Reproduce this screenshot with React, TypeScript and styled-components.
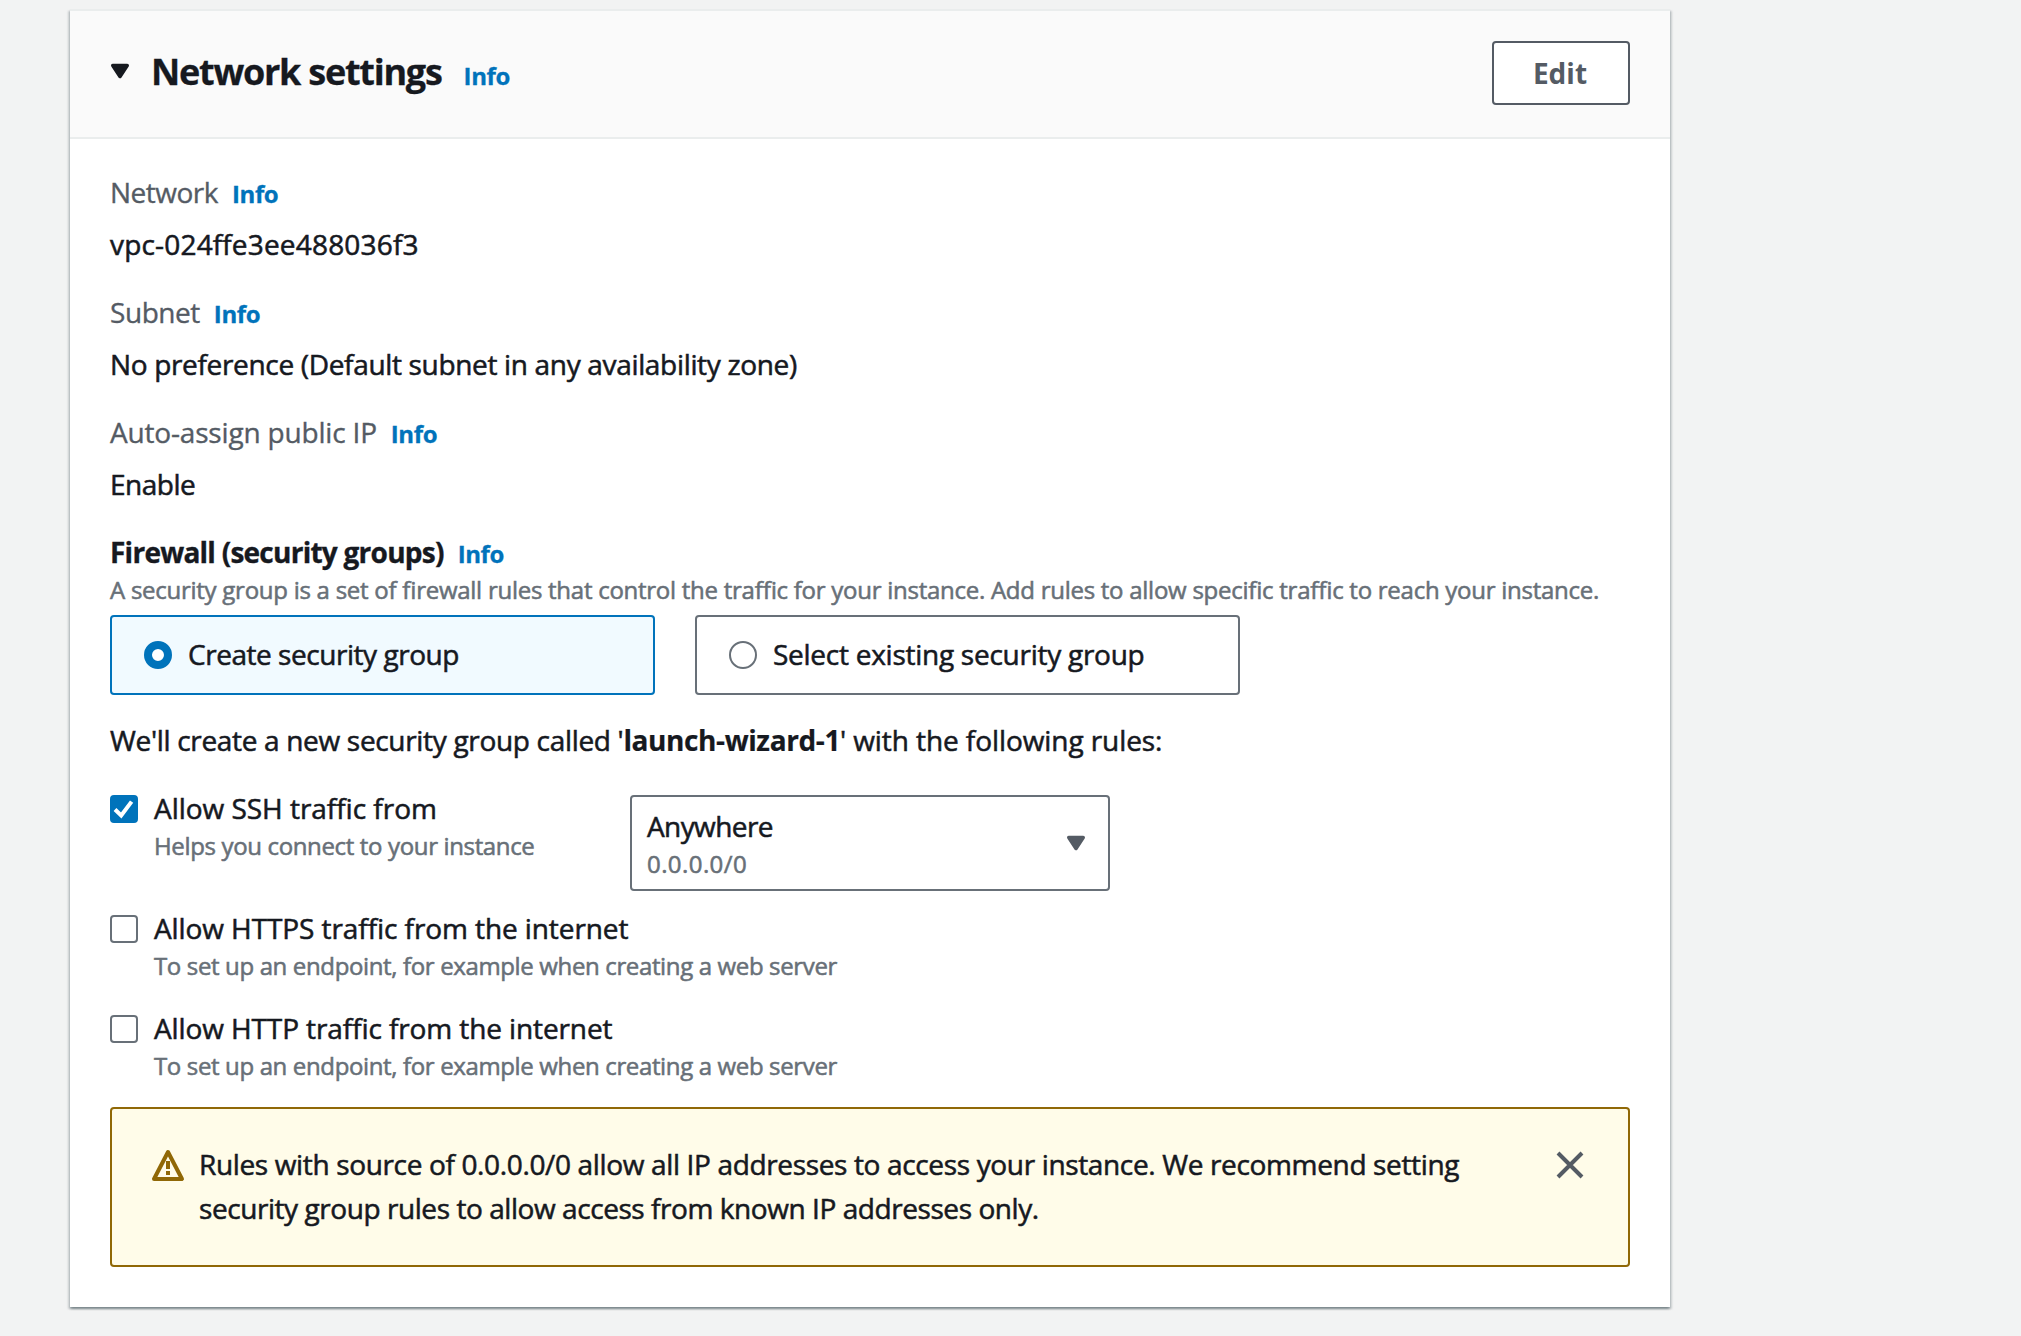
import React from 'react';
import styled, { createGlobalStyle } from 'styled-components';

const color = {
  page: '#f2f3f3',
  text: '#16191f',
  label: '#545b64',
  hint: '#687078',
  link: '#0073bb',
  selected: '#f1faff',
  divider: '#eaeded',
  warning: '#906806',
  warningBg: '#fffce9',
};

const GlobalStyle = createGlobalStyle`
  *, *::before, *::after { box-sizing: border-box; }
  html, body { margin: 0; background: ${color.page}; }
  body {
    min-height: 1336px;
    overflow: hidden;
    color: ${color.text};
    font-family: 'Open Sans', 'Noto Sans', sans-serif;
    font-size: 28px;
    line-height: 44px;
    font-feature-settings: 'liga' 1, 'kern' 1;
  }
  button { font: inherit; cursor: pointer; }
`;

const Page = styled.main`
  min-height: 1336px;
  padding: 9px 0 29px 70px;
`;

const Panel = styled.section`
  width: 1600px;
  background: #fff;
  border-top: 2px solid ${color.divider};
  box-shadow:
    0 2px 2px 0 rgba(0, 28, 36, 0.3),
    2px 2px 2px 0 rgba(0, 28, 36, 0.15),
    -2px 2px 2px 0 rgba(0, 28, 36, 0.15);
`;

const PanelHeader = styled.header`
  display: flex;
  align-items: flex-start;
  height: 128px;
  padding: 30px 40px 0;
  background: #fafafa;
  border-bottom: 2px solid ${color.divider};
`;

const HeaderCaret = styled.svg`
  flex: none;
  margin: 22px 21px 0 0;
`;

const TitleRow = styled.div`
  display: flex;
  flex: 1;
  align-items: baseline;
  gap: 22px;
  margin-top: 9px;
`;

const Title = styled.h2`
  margin: 0;
  font-size: 36px;
  font-weight: 700;
  line-height: 44px;
  letter-spacing: -1.25px;
  -webkit-text-stroke: 0.3px currentColor;
`;

const InfoLink = styled.a`
  color: ${color.link};
  font-size: 24px;
  font-weight: 700;
  letter-spacing: -0.4px;
  text-decoration: none;
  -webkit-text-stroke: 0.3px currentColor;
`;

const EditButton = styled.button`
  width: 138px;
  height: 64px;
  padding: 0 2px 0 0;
  background: #fff;
  border: 2px solid ${color.label};
  border-radius: 4px;
  color: ${color.label};
  font-weight: 700;
`;

const Body = styled.div`
  display: flex;
  flex-direction: column;
  padding: 31px 40px 40px;
`;

const Field = styled.div`
  display: flex;
  flex-direction: column;
  gap: 8px;
  margin-bottom: 24px;
`;

const LabelRow = styled.div<{ $strong?: boolean }>`
  display: flex;
  align-items: baseline;
  gap: 14px;
  height: 44px;
  color: ${(p) => (p.$strong ? color.text : color.label)};
  font-weight: ${(p) => (p.$strong ? 700 : 400)};
`;

const Text = styled.span<{ $track?: number }>`
  white-space: nowrap;
  letter-spacing: ${(p) => p.$track ?? 0}px;
  -webkit-text-stroke: 0.55px currentColor;
`;

const LabelText = styled.span<{ $track?: number }>`
  white-space: nowrap;
  letter-spacing: ${(p) => p.$track ?? 0}px;
  -webkit-text-stroke: 0.35px currentColor;
`;

const Strong = styled.strong`
  font-weight: 700;
  letter-spacing: -0.4px;
  -webkit-text-stroke: 0.2px currentColor;
`;

const Value = styled(Text)`
  height: 44px;
`;

const Hint = styled.div<{ $track?: number }>`
  margin-top: -2px;
  color: ${color.hint};
  font-size: 24px;
  line-height: 36px;
  white-space: nowrap;
  letter-spacing: ${(p) => p.$track ?? 0}px;
  -webkit-text-stroke: 0.55px currentColor;
`;

const Cards = styled.div`
  display: flex;
  gap: 40px;
  margin-top: 7px;
`;

const Card = styled.label<{ $on?: boolean }>`
  display: flex;
  align-items: flex-start;
  gap: 16px;
  width: 545px;
  height: 80px;
  padding: 15px 32px 0;
  background: ${(p) => (p.$on ? color.selected : '#fff')};
  border: 2px solid ${(p) => (p.$on ? color.link : color.hint)};
  border-radius: 4px;
`;

const Radio = styled.span<{ $on?: boolean }>`
  flex: none;
  width: 28px;
  height: 28px;
  margin-top: 9px;
  background: #fff;
  border: ${(p) => (p.$on ? `8px solid ${color.link}` : `2px solid ${color.hint}`)};
  border-radius: 50%;
`;

const Summary = styled.p`
  margin: 23px 0 24px;
`;

const Rule = styled.div<{ $after: number }>`
  display: flex;
  align-items: flex-start;
  margin-bottom: ${(p) => p.$after}px;
`;

const Check = styled.span<{ $on?: boolean }>`
  display: flex;
  flex: none;
  width: 28px;
  height: 28px;
  margin: 9px 16px 0 0;
  background: ${(p) => (p.$on ? color.link : '#fff')};
  border: 2px solid ${(p) => (p.$on ? color.link : color.hint)};
  border-radius: 4px;
`;

const RuleText = styled.div<{ $width?: number }>`
  width: ${(p) => (p.$width ? `${p.$width}px` : 'auto')};
`;

const Select = styled.button`
  display: flex;
  align-items: center;
  justify-content: space-between;
  width: 480px;
  height: 96px;
  margin-top: 9px;
  padding: 0 22px 0 15px;
  background: #fff;
  border: 2px solid ${color.hint};
  border-radius: 4px;
  color: inherit;
  text-align: left;
`;

const SelectText = styled.span`
  display: flex;
  flex-direction: column;
`;

const Alert = styled.div`
  display: flex;
  align-items: flex-start;
  height: 160px;
  margin-top: 23px;
  padding: 33px 43px 0 39px;
  background: ${color.warningBg};
  border: 2px solid ${color.warning};
  border-radius: 4px;
`;

const AlertIcon = styled.svg`
  flex: none;
  margin: 7px 14px 0 0;
`;

const AlertText = styled.div`
  display: flex;
  flex: 1;
  flex-direction: column;
`;

const CloseButton = styled.button`
  display: flex;
  margin-top: 8px;
  padding: 0;
  background: none;
  border: 0;
`;

const caretPath = 'M2 2h16l-8 12z';

const fields = [
  { label: 'Network', lt: -0.5, value: 'vpc-024ffe3ee488036f3', vt: 0.18 },
  {
    label: 'Subnet',
    lt: -0.45,
    value: 'No preference (Default subnet in any availability zone)',
    vt: -0.33,
  },
  { label: 'Auto-assign public IP', lt: -0.18, value: 'Enable', vt: -0.5 },
];

const webServerHint = 'To set up an endpoint, for example when creating a web server';

export default function App() {
  return (
    <>
      <GlobalStyle />
      <Page>
        <Panel>
          <PanelHeader>
            <HeaderCaret width="20" height="16" viewBox="0 0 20 16">
              <path d={caretPath} fill={color.text} stroke={color.text} strokeWidth="4" strokeLinejoin="round" transform="translate(1 .8) scale(.9)" />
            </HeaderCaret>
            <TitleRow>
              <Title>Network settings</Title>
              <InfoLink>Info</InfoLink>
            </TitleRow>
            <EditButton>Edit</EditButton>
          </PanelHeader>
          <Body>
            {fields.map((f) => (
              <Field key={f.label}>
                <LabelRow>
                  <LabelText $track={f.lt}>{f.label}</LabelText>
                  <InfoLink>Info</InfoLink>
                </LabelRow>
                <Value $track={f.vt}>{f.value}</Value>
              </Field>
            ))}

            <LabelRow $strong>
              <LabelText $track={-0.75}>Firewall (security groups)</LabelText>
              <InfoLink>Info</InfoLink>
            </LabelRow>
            <Hint $track={-0.262}>
              A security group is a set of firewall rules that control the traffic for your instance. Add rules to allow
              specific traffic to reach your instance.
            </Hint>
            <Cards>
              <Card $on>
                <Radio $on />
                <Text $track={-0.46}>Create security group</Text>
              </Card>
              <Card>
                <Radio />
                <Text $track={-0.26}>Select existing security group</Text>
              </Card>
            </Cards>

            <Summary>
              <Text $track={-0.32}>We'll create a new security group called '</Text>
              <Strong>launch-wizard-1</Strong>
              <Text $track={-0.08}>' with the following rules:</Text>
            </Summary>

            <Rule $after={15}>
              <Check $on>
                <svg width="24" height="24" viewBox="0 0 24 24">
                  <path d="M3 12.5l6.2 6L19.6 4.6" fill="none" stroke="#fff" strokeWidth="4" />
                </svg>
              </Check>
              <RuleText $width={476}>
                <Text $track={-0.03}>Allow SSH traffic from</Text>
                <Hint $track={-0.35}>Helps you connect to your instance</Hint>
              </RuleText>
              <Select>
                <SelectText>
                  <Text $track={-0.6}>Anywhere</Text>
                  <Hint as="span" $track={0.42}>0.0.0.0/0</Hint>
                </SelectText>
                <svg width="20" height="16" viewBox="0 0 20 16">
                  <path d={caretPath} fill={color.label} stroke={color.label} strokeWidth="4" strokeLinejoin="round" transform="translate(1 .8) scale(.9)" />
                </svg>
              </Select>
            </Rule>
            <Rule $after={22}>
              <Check />
              <RuleText>
                <Text $track={-0.09}>Allow HTTPS traffic from the internet</Text>
                <Hint $track={-0.36}>{webServerHint}</Hint>
              </RuleText>
            </Rule>
            <Rule $after={0}>
              <Check />
              <RuleText>
                <Text $track={-0.11}>Allow HTTP traffic from the internet</Text>
                <Hint $track={-0.36}>{webServerHint}</Hint>
              </RuleText>
            </Rule>

            <Alert>
              <AlertIcon width="34" height="32" viewBox="0 0 34 32">
                <path d="M17 3L31 30H3z" fill="none" stroke={color.warning} strokeWidth="4" strokeLinejoin="round" />
                <path d="M17 12v8M17 22v4" fill="none" stroke={color.warning} strokeWidth="4" />
              </AlertIcon>
              <AlertText>
                <Text $track={-0.35}>
                  Rules with source of 0.0.0.0/0 allow all IP addresses to access your instance. We recommend setting
                </Text>
                <Text $track={-0.435}>security group rules to allow access from known IP addresses only.</Text>
              </AlertText>
              <CloseButton aria-label="Dismiss">
                <svg width="30" height="30" viewBox="0 0 30 30">
                  <path d="M3 3l24 24M27 3L3 27" fill="none" stroke={color.label} strokeWidth="4" />
                </svg>
              </CloseButton>
            </Alert>
          </Body>
        </Panel>
      </Page>
    </>
  );
}
